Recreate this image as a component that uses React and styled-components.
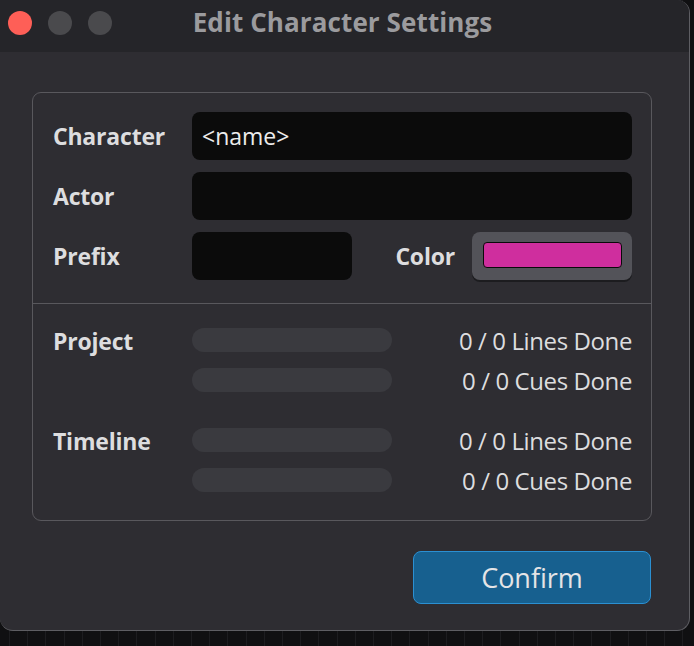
import React from 'react';
import styled, { createGlobalStyle } from 'styled-components';

const GlobalStyle = createGlobalStyle`
  html, body {
    margin: 0;
    padding: 0;
    height: 100%;
  }
  body {
    background-color: #101012;
    background-image: repeating-linear-gradient(90deg, #101012 0 9px, #1d1d20 9px 10px, #101012 10px 18.2px);
    font-family: "Open Sans", "Noto Sans", sans-serif;
  }
`;

const Window = styled.div`
  width: 690px;
  height: 631px;
  box-sizing: border-box;
  background: #2e2d32;
  border-right: 1px solid #5e5e63;
  border-bottom: 1px solid #5e5e63;
  border-radius: 0 13px 13px 13px;
  display: flex;
  flex-direction: column;
  overflow: hidden;
`;

const TitleBar = styled.div`
  height: 52px;
  flex-shrink: 0;
  background: #252529;
  position: relative;
  display: flex;
  align-items: center;
  justify-content: center;
`;

const Lights = styled.div`
  position: absolute;
  left: 8px;
  top: 11px;
  display: flex;
  gap: 16px;
`;

const Light = styled.span`
  width: 24px;
  height: 24px;
  border-radius: 50%;
  background: ${(p) => p.color};
`;

const Title = styled.div`
  color: #9b9b9e;
  font-size: 26px;
  font-weight: 700;
  letter-spacing: 0.1px;
  margin-left: -4px;
  margin-top: -9px;
`;

const Body = styled.div`
  flex: 1;
  padding: 40px 37px 0 32px;
  display: flex;
  flex-direction: column;
`;

const Panel = styled.div`
  border: 1px solid #59585d;
  border-radius: 9px;
  display: flex;
  flex-direction: column;
`;

const Fields = styled.div`
  padding: 19px 19px 23px 20px;
  display: flex;
  flex-direction: column;
  gap: 12px;
`;

const Row = styled.div`
  display: flex;
  align-items: center;
  height: 48px;
`;

const Label = styled.div`
  width: ${(p) => (p.auto ? 'auto' : '139px')};
  color: #dddddf;
  font-size: 23px;
  font-weight: 700;
  letter-spacing: -0.2px;
  flex-shrink: 0;
`;

const Input = styled.div`
  height: 48px;
  box-sizing: border-box;
  width: ${(p) => p.w || 'auto'};
  flex: ${(p) => (p.w ? 'none' : '1')};
  background: #0b0b0b;
  border-radius: 8px;
  color: #ececec;
  font-size: 23px;
  padding-left: 10px;
  display: flex;
  align-items: center;
`;

const Spacer = styled.div`
  flex: 1;
`;

const ColorButton = styled.div`
  width: 160px;
  height: 48px;
  box-sizing: border-box;
  margin-left: 17px;
  background: #535359;
  border-radius: 8px;
  box-shadow: 0 2px 0 #1c1c1f;
  padding: 10px 10px 0 11px;
`;

const Swatch = styled.div`
  height: 26px;
  box-sizing: border-box;
  background: #cf2e9e;
  border: 1.5px solid #0a0a0a;
  border-radius: 4px;
`;

const Divider = styled.div`
  height: 1px;
  background: #59585d;
`;

const Stats = styled.div`
  padding: 24px 19px 28px 20px;
  display: flex;
  flex-direction: column;
  gap: 36px;
`;

const Group = styled.div`
  display: grid;
  grid-template-columns: 139px 200px 1fr;
  grid-auto-rows: 24px;
  row-gap: 16px;
  align-items: center;
`;

const GroupLabel = styled(Label)`
  grid-row: span 2;
  align-self: start;
  line-height: 26px;
`;

const Bar = styled.div`
  grid-column: 2;
  height: 24px;
  border-radius: 12px;
  background: #3a3a3f;
`;

const Count = styled.div`
  text-align: right;
  color: #dddddf;
  font-size: 24px;
  letter-spacing: -0.4px;
  line-height: 24px;
  padding-top: 2px;
`;

const Footer = styled.div`
  display: flex;
  justify-content: flex-end;
  padding-top: 30px;
  margin-right: 1px;
`;

const ConfirmButton = styled.button`
  width: 238px;
  height: 53px;
  background: #17608f;
  border: 1.5px solid #2b90d2;
  border-radius: 8px;
  color: #e4e4e6;
  font-family: "Open Sans", "Noto Sans", sans-serif;
  font-size: 27px;
  cursor: pointer;
  outline: none;
  padding: 0;
`;

const stats = [
  { name: 'Project', lines: '0 / 0 Lines Done', cues: '0 / 0 Cues Done' },
  { name: 'Timeline', lines: '0 / 0 Lines Done', cues: '0 / 0 Cues Done' },
];

export default function App() {
  return (
    <>
      <GlobalStyle />
      <Window>
        <TitleBar>
          <Lights>
            <Light color="#fe5f57" />
            <Light color="#4a4a4d" />
            <Light color="#4a4a4d" />
          </Lights>
          <Title>Edit Character Settings</Title>
        </TitleBar>
        <Body>
          <Panel>
            <Fields>
              <Row>
                <Label>Character</Label>
                <Input>&lt;name&gt;</Input>
              </Row>
              <Row>
                <Label>Actor</Label>
                <Input />
              </Row>
              <Row>
                <Label>Prefix</Label>
                <Input w="160px" />
                <Spacer />
                <Label auto>Color</Label>
                <ColorButton>
                  <Swatch />
                </ColorButton>
              </Row>
            </Fields>
            <Divider />
            <Stats>
              {stats.map((s) => (
                <Group key={s.name}>
                  <GroupLabel>{s.name}</GroupLabel>
                  <Bar />
                  <Count>{s.lines}</Count>
                  <Bar />
                  <Count>{s.cues}</Count>
                </Group>
              ))}
            </Stats>
          </Panel>
          <Footer>
            <ConfirmButton>Confirm</ConfirmButton>
          </Footer>
        </Body>
      </Window>
    </>
  );
}
